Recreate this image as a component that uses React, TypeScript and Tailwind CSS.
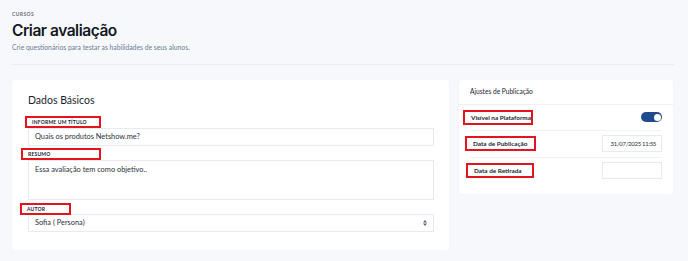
import React from "react";

function FieldLabel({ text, width, shift }: { text: string; width: string; shift: string }) {
  return (
    <div className={`relative h-[12px] ${shift} ${width} border-2 border-[#e4141e]`}>
      <span className="absolute left-[5px] top-[1px] text-[5px] font-bold uppercase tracking-[0.04em] text-[#1d2433]">
        {text}
      </span>
    </div>
  );
}

function RowLabel({ text, width, shift }: { text: string; width: string; shift: string }) {
  return (
    <div className={`h-[15px] ${shift} ${width} whitespace-nowrap border-2 border-[#e4141e] pl-[6px] pt-[1px] text-[6.4px] font-bold leading-[9px] text-[#1d2433]`}>
      {text}
    </div>
  );
}

export default function App() {
  return (
    <div className="min-h-screen bg-[#f7f8fb] px-3 pt-[11px] font-['Lato','Liberation_Sans',sans-serif]">
      {/* Header */}
      <div className="text-[5px] font-bold uppercase tracking-[0.08em] text-[#6b7380]">Cursos</div>
      <h1 className="mt-[2px] font-['Inter','Liberation_Sans',sans-serif] text-[15.5px] font-semibold leading-[20px] tracking-[-0.03em] text-[#12161f]">
        Criar avaliação
      </h1>
      <p className="mt-[1px] text-[6.8px] leading-[10px] text-[#6c7d97]">
        Crie questionários para testar as habilidades de seus alunos.
      </p>
      <div className="mt-[12px] h-px w-[663px] -ml-px bg-[#e9edf4]" />

      <div className="mt-[15px] flex items-start gap-[10px]">
        {/* Dados Básicos */}
        <div className="w-[437px] rounded-[3px] bg-white pl-[16px] pr-[15px] pt-[13px] pb-[18px] shadow-[0_0_1px_rgba(0,0,0,0.08)]">
          <h2 className="text-[10.5px] leading-[14px] text-[#1a1f2b]">Dados Básicos</h2>

          <div className="mt-[9px]">
            <FieldLabel text="Informe um título" width="w-[76px]" shift="-ml-[3px]" />
            <div className="flex h-[18px] items-center border border-[#e6eaf2] pl-[6px] text-[7.4px] text-[#2a303b]">
              Quais os produtos Netshow.me?
            </div>
          </div>

          <div className="mt-[2px]">
            <FieldLabel text="Resumo" width="w-[80px]" shift="-ml-[7px]" />
            <div className="h-[40px] border border-[#e6eaf2] pl-[6px] pt-[4px] text-[7.4px] leading-[10px] text-[#2a303b]">
              Essa avaliação tem como objetivo..
            </div>
          </div>

          <div className="mt-[3px]">
            <FieldLabel text="Autor" width="w-[51px]" shift="-ml-[8px]" />
            <div className="-mt-px flex h-[18px] items-center justify-between border border-[#e6eaf2] pl-[6px] pr-[6px] text-[7.4px] text-[#2a303b]">
              <span>Sofia ( Persona)</span>
              <svg width="4" height="6" viewBox="0 0 4 6" className="text-[#5a6272]">
                <path d="M2 0 L4 2.4 H0 Z M2 6 L0 3.6 H4 Z" fill="currentColor" />
              </svg>
            </div>
          </div>
        </div>

        {/* Ajustes de Publicação */}
        <div className="w-[214px] rounded-[3px] bg-white shadow-[0_0_1px_rgba(0,0,0,0.08)]">
          <div className="flex h-[25px] items-center border-b border-[#eef1f6] px-[11px] text-[6.6px] text-[#1d2433]">
            Ajustes de Publicação
          </div>
          <div className="px-[11px] pb-[10px]">
            <div className="flex h-[26px] items-center justify-between border-b border-[#eef1f6]">
              <RowLabel text="Visível na Plataforma" width="w-[70px]" shift="-ml-[7px]" />
              <div className="flex h-[10px] w-[21px] items-center justify-end rounded-full bg-[#1f4b8e] pr-[1.5px]">
                <div className="h-[7px] w-[7px] rounded-full bg-white" />
              </div>
            </div>
            <div className="flex h-[27px] items-center justify-between border-b border-[#eef1f6]">
              <RowLabel text="Data de Publicação" width="w-[71px]" shift="-ml-[5px]" />
              <div className="flex h-[17px] w-[60px] items-center justify-end whitespace-nowrap border border-[#e6eaf2] pr-[5px] text-[6px] tracking-[-0.05em] text-[#2a303b]">
                31/07/2025 11:55
              </div>
            </div>
            <div className="flex h-[26px] items-center justify-between">
              <RowLabel text="Data de Retirada" width="w-[68px]" shift="-ml-[4px]" />
              <div className="h-[17px] w-[60px] border border-[#e6eaf2]" />
            </div>
          </div>
        </div>
      </div>
    </div>
  );
}
